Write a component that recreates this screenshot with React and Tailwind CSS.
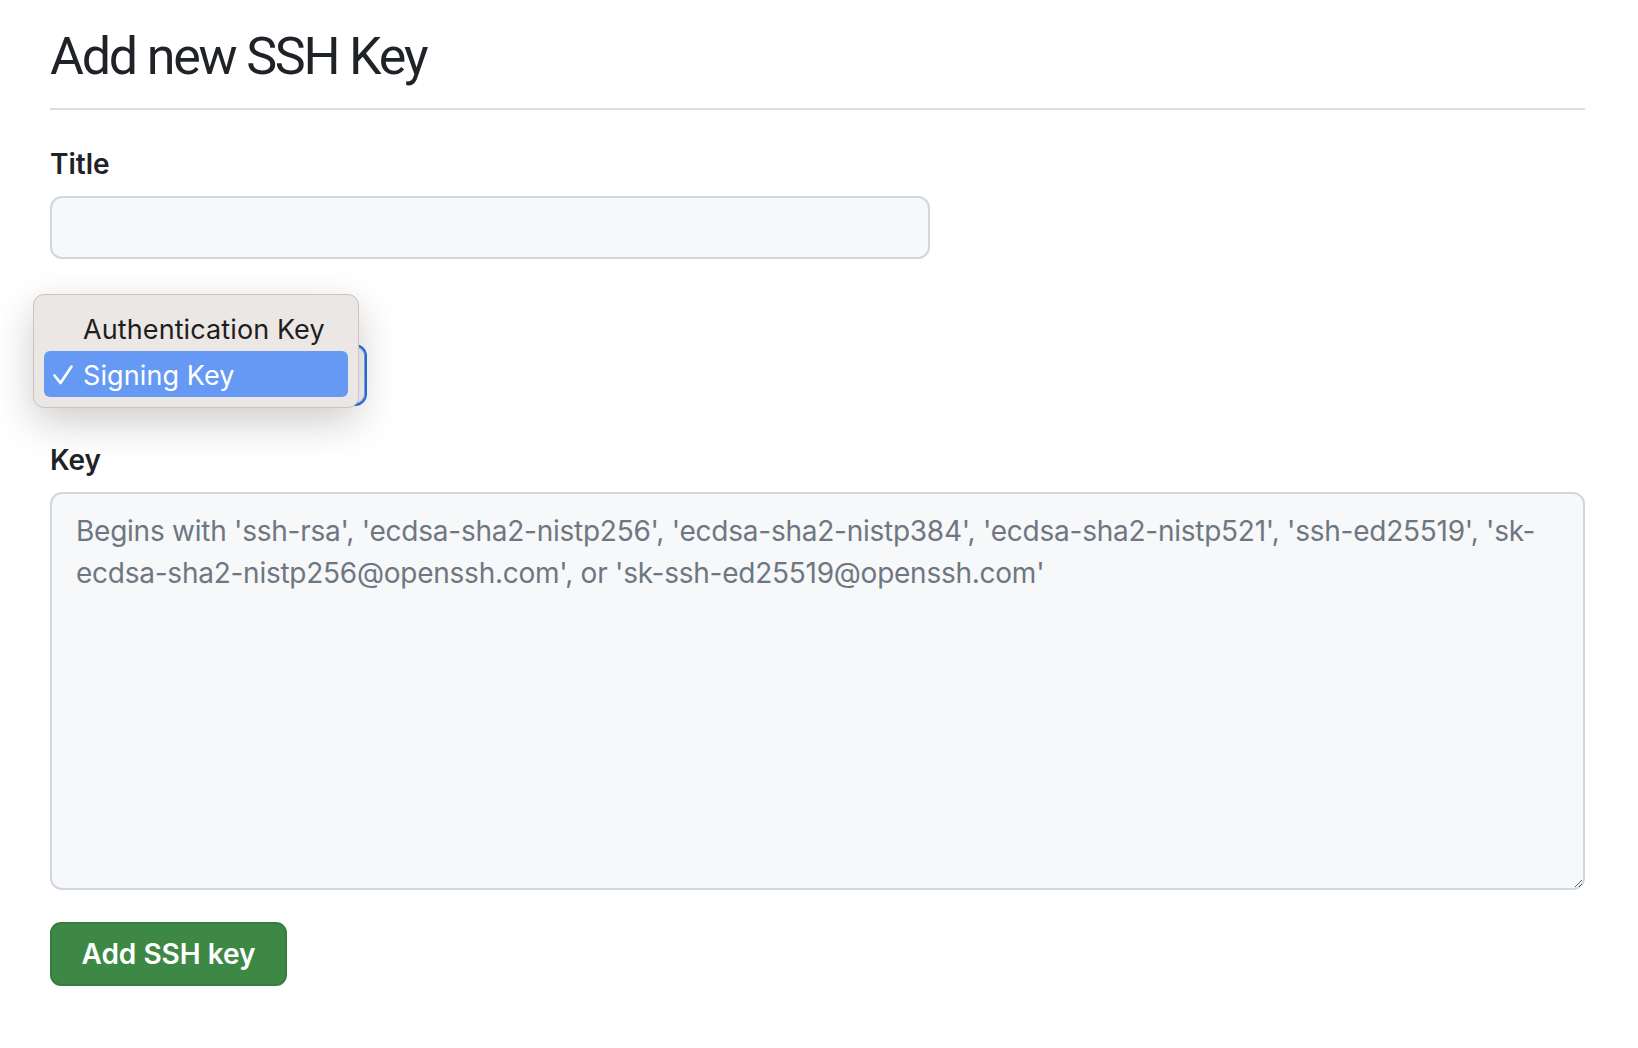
import { useState } from 'react'

const PLACEHOLDER =
  "Begins with 'ssh-rsa', 'ecdsa-sha2-nistp256', 'ecdsa-sha2-nistp384', 'ecdsa-sha2-nistp521', 'ssh-ed25519', 'sk-ecdsa-sha2-nistp256@openssh.com', or 'sk-ssh-ed25519@openssh.com'"

function Label({ htmlFor, children }) {
  return (
    <label htmlFor={htmlFor} className="block h-[42px] text-[28px] leading-[42px] font-semibold text-[#1f2328] mb-[11px]">
      {children}
    </label>
  )
}

function TypeMenu({ options, value }) {
  return (
    <div className="absolute left-[-17px] top-[-50px] z-10 w-[326px] rounded-[11px] border border-[#c9c5c2] bg-[#ebe7e4] p-[10px] shadow-[0_14px_40px_rgba(0,0,0,0.2)]">
      {options.map((opt) => {
        const active = opt === value
        return (
          <div
            key={opt}
            className={
              active
                ? 'relative flex h-[46px] items-center rounded-[6px] bg-[#6699f4] pl-[39px] pt-[5px] text-[27px] tracking-[0.1px] text-white'
                : 'relative flex h-[46px] items-center rounded-[6px] pl-[39px] pt-[5px] text-[27px] tracking-[0.1px] text-[#1e1e1e]'
            }
          >
            {active && (
              <svg className="absolute left-[9px] top-[14px]" width="20" height="20" viewBox="0 0 20 20" fill="none">
                <path d="M1.5 10.5 L7.5 18 L18.5 1.5" stroke="white" strokeWidth="2.6" strokeLinecap="round" strokeLinejoin="round" />
              </svg>
            )}
            {opt}
          </div>
        )
      })}
    </div>
  )
}

export default function App() {
  const [title, setTitle] = useState('')
  const [key, setKey] = useState('')

  return (
    <div className="min-h-screen bg-white font-['Inter',sans-serif] text-[#1f2328]">
      <div className="ml-[50px] w-[1535px] pt-[24px]">
        <h2 className="border-b-2 border-[#d8dee4] pb-[19px] font-['Roboto',sans-serif] text-[52px] leading-[65px] font-normal tracking-[-2.2px]">
          Add new SSH Key
        </h2>

        <form className="pt-[33px]" onSubmit={(e) => e.preventDefault()}>
          <div className="mb-[32px]">
            <Label htmlFor="title">Title</Label>
            <input
              id="title"
              value={title}
              onChange={(e) => setTitle(e.target.value)}
              className="block h-[63px] w-[880px] rounded-[12px] border-2 border-[#d0d7de] bg-[#f6f8fa] px-[24px] text-[28px] outline-none"
            />
          </div>

          <div className="mb-[33px]">
            <Label htmlFor="type">Key type</Label>
            <div className="relative w-[317px]">
              <div
                id="type"
                className="flex h-[62px] w-[317px] items-center rounded-[12px] border-2 border-[#2f6fdc] bg-[#f6f8fa] px-[24px] text-[28px] shadow-[inset_0_0_0_1px_#7ea8ee]"
              >
                Signing Key
              </div>
              <TypeMenu options={['Authentication Key', 'Signing Key']} value="Signing Key" />
            </div>
          </div>

          <div className="mb-[32px]">
            <Label htmlFor="key">Key</Label>
            <textarea
              id="key"
              value={key}
              onChange={(e) => setKey(e.target.value)}
              placeholder={PLACEHOLDER}
              className="block h-[398px] w-full rounded-[12px] border-2 border-[#d0d7de] bg-[#f6f8fa] px-[24px] pt-[16px] text-[28px] leading-[42px] tracking-[-0.25px] text-[#1f2328] outline-none placeholder:text-[#6e7781]"
            />
          </div>

          <button
            type="submit"
            className="h-[64px] w-[237px] rounded-[11px] border-2 border-[#377c3e] bg-[#3e8845] text-[28px] font-semibold text-white"
          >
            Add SSH key
          </button>
        </form>
      </div>
    </div>
  )
}
